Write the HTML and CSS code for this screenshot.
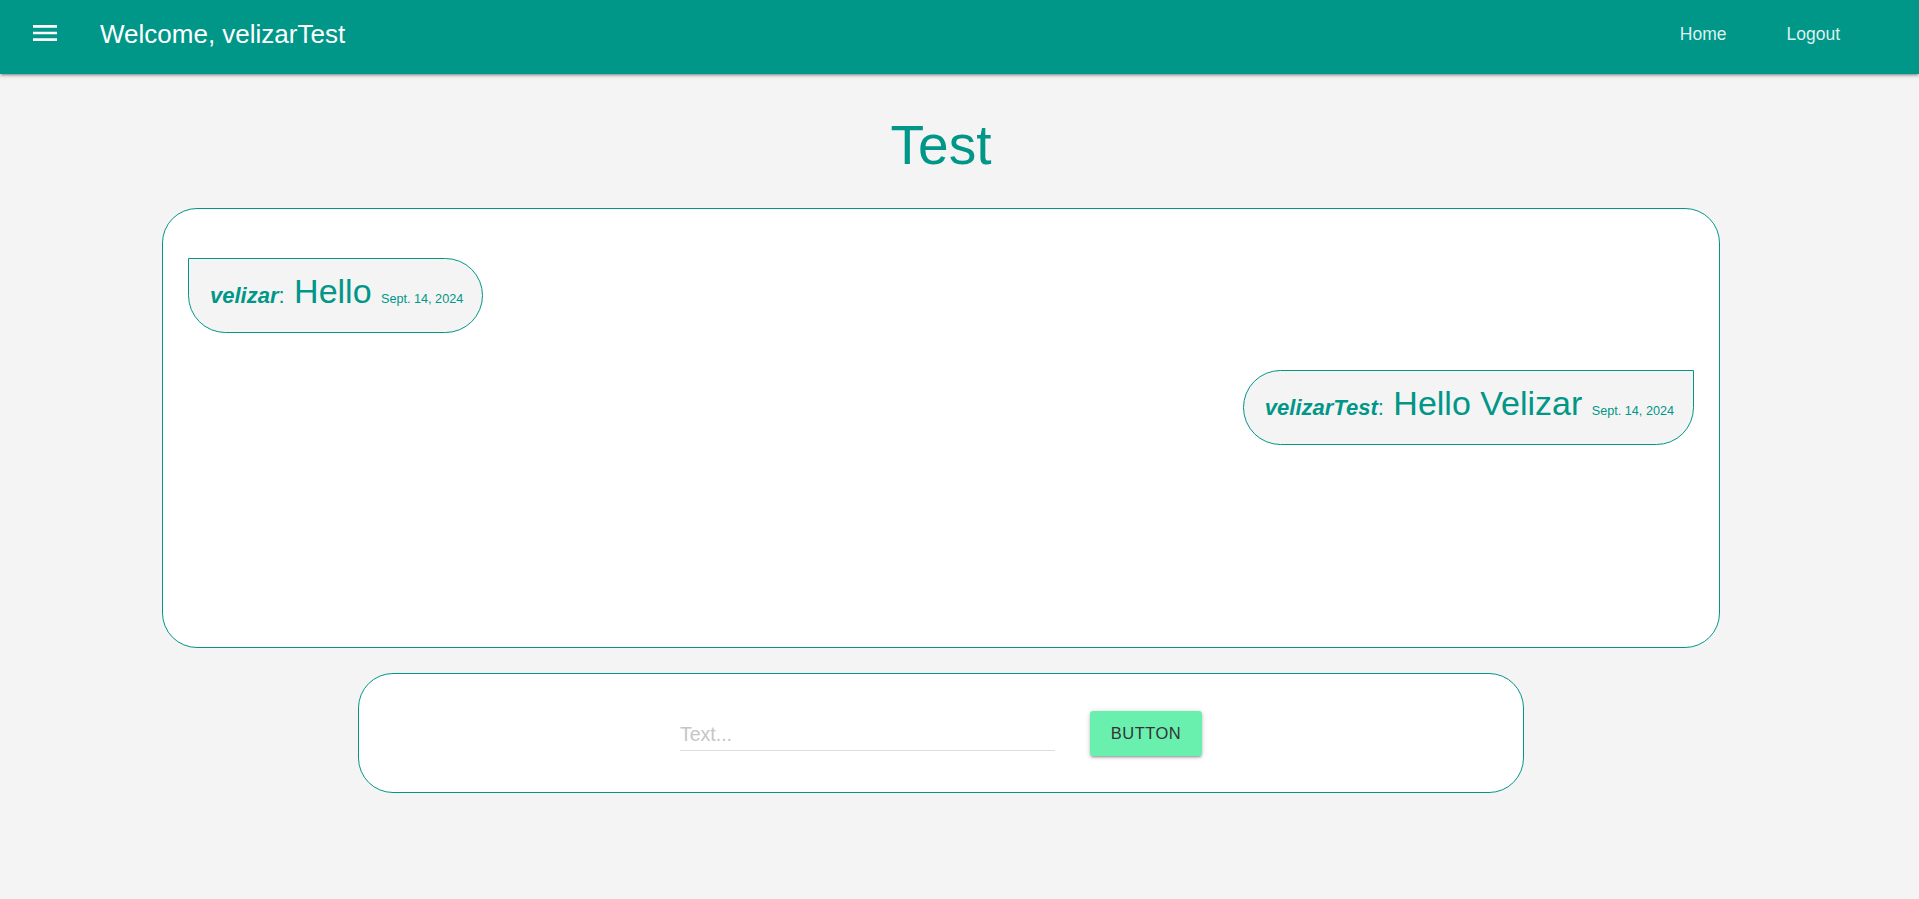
FILE: index.html
```html
<!DOCTYPE html>
<html lang="en">
<head>
<meta charset="utf-8">
<title>Test</title>
<link rel="stylesheet" href="styles.css">
</head>
<body>
<nav class="nav">
  <div class="nav-left">
    <svg class="menu-icon" viewBox="0 0 24 24" width="32" height="32" aria-hidden="true">
      <path d="M3 18h18v-2H3v2zm0-5h18v-2H3v2zm0-7v2h18V6H3z" fill="#fff"/>
    </svg>
    <span class="brand">Welcome, velizarTest</span>
  </div>
  <ul class="nav-links">
    <li><a href="#">Home</a></li>
    <li><a href="#">Logout</a></li>
  </ul>
</nav>
<main class="page">
  <h1 class="title">Test</h1>
  <section class="chat">
    <div class="row row-left">
      <div class="bubble bubble-left">
        <span class="author"><b>velizar</b>:</span> Hello <small class="date">Sept. 14, 2024</small>
      </div>
    </div>
    <div class="row row-right">
      <div class="bubble bubble-right">
        <span class="author"><b>velizarTest</b>:</span> Hello Velizar <small class="date">Sept. 14, 2024</small>
      </div>
    </div>
  </section>
  <form class="composer">
    <input class="text-input" type="text" placeholder="Text...">
    <button class="btn" type="button">BUTTON</button>
  </form>
</main>
</body>
</html>
```

FILE: styles.css
```css
* { box-sizing: border-box; }
html, body { margin: 0; padding: 0; }
body {
  background: #f4f4f4;
  font-family: "Liberation Sans", Arial, sans-serif;
  color: #009688;
}
.nav {
  height: 74px;
  background: #009688;
  display: flex;
  align-items: center;
  justify-content: space-between;
  padding: 0 79px 6px 29px;
  box-shadow: 0 2px 2px 0 rgba(0,0,0,.14), 0 3px 1px -2px rgba(0,0,0,.12), 0 1px 5px 0 rgba(0,0,0,.2);
  position: relative;
  z-index: 1;
}
.nav-left { display: flex; align-items: center; }
.menu-icon { display: block; margin-top: -2px; }
.brand {
  color: #fff;
  font-size: 26px;
  margin-left: 39px;
}
.nav-links {
  list-style: none;
  margin: 0;
  padding: 0;
  display: flex;
  gap: 60px;
}
.nav-links a {
  color: #dcf1ef;
  text-decoration: none;
  font-size: 17.5px;
}
.page {
  width: 1882px;
}
.title {
  margin: 0;
  padding-top: 40px;
  height: 134px;
  text-align: center;
  font-weight: normal;
  font-size: 55px;
  line-height: 62px;
  color: #009688;
}
.chat {
  width: 1558px;
  height: 440px;
  margin: 0 auto;
  background: #fff;
  border: 1px solid #009688;
  border-radius: 35px;
  padding: 49px 25px 0 25px;
  display: flex;
  flex-direction: column;
  gap: 37px;
}
.row { display: flex; }
.row-right { justify-content: flex-end; }
.bubble {
  height: 75px;
  background: #f4f4f4;
  border: 1px solid #009688;
  font-size: 34px;
  line-height: 1;
  padding: 15px 19px 0 21px;
  white-space: nowrap;
  color: #009688;
}
.bubble-left { border-radius: 0 40px 40px 40px; }
.bubble-right { border-radius: 40px 0 40px 40px; }
.author { font-size: 22px; }
.author b { font-style: italic; font-weight: bold; }
.date { font-size: 12.65px; }
.composer {
  width: 1166px;
  height: 120px;
  margin: 25px auto 0;
  background: #fff;
  border: 1px solid #009688;
  border-radius: 35px;
  display: flex;
  align-items: center;
  justify-content: center;
  gap: 35px;
}
.text-input {
  width: 375px;
  height: 36px;
  border: none;
  border-bottom: 1px solid #dcdcdc;
  outline: none;
  background: transparent;
  padding: 3px 0 0 0;
  font-family: "Liberation Sans", Arial, sans-serif;
  font-size: 19.5px;
  color: #333;
}
.text-input::placeholder { color: #c4c6c8; }
.btn {
  width: 112px;
  height: 45px;
  border: none;
  border-radius: 3px;
  background: #69f0ae;
  color: #343434;
  font-family: "Liberation Sans", Arial, sans-serif;
  font-size: 16.5px;
  letter-spacing: .5px;
  padding: 0;
  box-shadow: 0 2px 2px 0 rgba(0,0,0,.14), 0 3px 1px -2px rgba(0,0,0,.12), 0 1px 5px 0 rgba(0,0,0,.2);
  cursor: pointer;
}
```
